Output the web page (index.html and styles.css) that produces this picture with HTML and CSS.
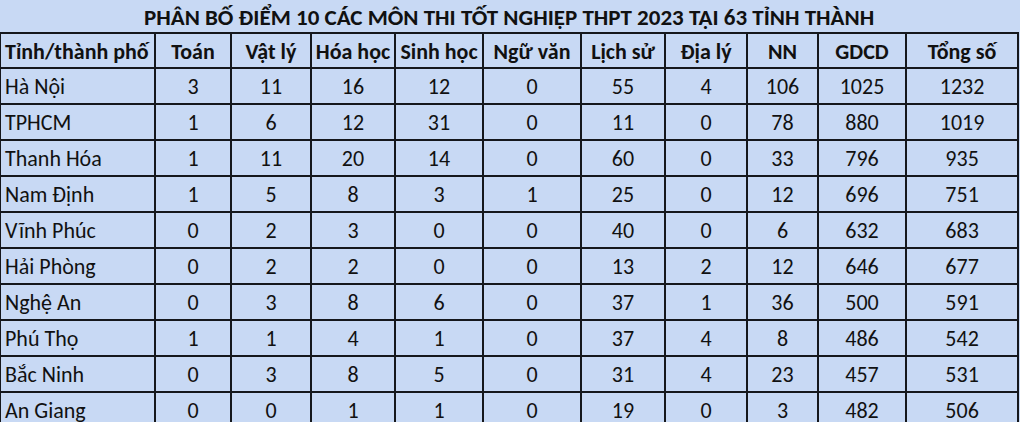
FILE: index.html
```html
<!DOCTYPE html>
<html lang="vi">
<head>
<meta charset="utf-8">
<title>Phân bố điểm 10</title>
<link rel="stylesheet" href="styles.css">
</head>
<body>
<table class="scores">
  <colgroup>
    <col class="c-name"><col class="c1"><col class="c2"><col class="c3"><col class="c4"><col class="c5"><col class="c6"><col class="c7"><col class="c8"><col class="c9"><col class="c10">
  </colgroup>
  <thead>
    <tr class="title-row"><th colspan="11" class="title">PHÂN BỐ ĐIỂM 10 CÁC MÔN THI TỐT NGHIỆP THPT 2023 TẠI 63 TỈNH THÀNH</th></tr>
    <tr class="head-row">
      <th class="name">Tỉnh/thành phố</th><th>Toán</th><th>Vật lý</th><th>Hóa học</th><th>Sinh học</th><th>Ngữ văn</th><th>Lịch sử</th><th>Địa lý</th><th>NN</th><th>GDCD</th><th>Tổng số</th>
    </tr>
  </thead>
  <tbody>
    <tr><td class="name">Hà Nội</td><td>3</td><td>11</td><td>16</td><td>12</td><td>0</td><td>55</td><td>4</td><td>106</td><td>1025</td><td>1232</td></tr>
    <tr><td class="name">TPHCM</td><td>1</td><td>6</td><td>12</td><td>31</td><td>0</td><td>11</td><td>0</td><td>78</td><td>880</td><td>1019</td></tr>
    <tr><td class="name">Thanh Hóa</td><td>1</td><td>11</td><td>20</td><td>14</td><td>0</td><td>60</td><td>0</td><td>33</td><td>796</td><td>935</td></tr>
    <tr><td class="name">Nam Định</td><td>1</td><td>5</td><td>8</td><td>3</td><td>1</td><td>25</td><td>0</td><td>12</td><td>696</td><td>751</td></tr>
    <tr><td class="name">Vĩnh Phúc</td><td>0</td><td>2</td><td>3</td><td>0</td><td>0</td><td>40</td><td>0</td><td>6</td><td>632</td><td>683</td></tr>
    <tr><td class="name">Hải Phòng</td><td>0</td><td>2</td><td>2</td><td>0</td><td>0</td><td>13</td><td>2</td><td>12</td><td>646</td><td>677</td></tr>
    <tr><td class="name">Nghệ An</td><td>0</td><td>3</td><td>8</td><td>6</td><td>0</td><td>37</td><td>1</td><td>36</td><td>500</td><td>591</td></tr>
    <tr><td class="name">Phú Thọ</td><td>1</td><td>1</td><td>4</td><td>1</td><td>0</td><td>37</td><td>4</td><td>8</td><td>486</td><td>542</td></tr>
    <tr><td class="name">Bắc Ninh</td><td>0</td><td>3</td><td>8</td><td>5</td><td>0</td><td>31</td><td>4</td><td>23</td><td>457</td><td>531</td></tr>
    <tr><td class="name">An Giang</td><td>0</td><td>0</td><td>1</td><td>1</td><td>0</td><td>19</td><td>0</td><td>3</td><td>482</td><td>506</td></tr>
  </tbody>
</table>
</body>
</html>
```

FILE: styles.css
```css
html, body {
  margin: 0;
  padding: 0;
  background: #c8d9f4;
  overflow: hidden;
}
body {
  font-family: Carlito, Calibri, Lato, "Open Sans", sans-serif;
  color: #111;
  width: 1020px;
  height: 422px;
}
.scores {
  border-collapse: collapse;
  table-layout: fixed;
  width: 1018px;
  margin-left: -1px;
}
.c-name { width: 155px; }
.c1 { width: 76px; }
.c2 { width: 80px; }
.c3 { width: 84px; }
.c4 { width: 88px; }
.c5 { width: 98px; }
.c6 { width: 84px; }
.c7 { width: 82px; }
.c8 { width: 71px; }
.c9 { width: 88px; }
.c10 { width: 112px; }

.scores th, .scores td {
  border: 2px solid #15171c;
  padding: 2px 0 0;
  text-align: center;
  font-size: 22px;
  line-height: 26px;
  white-space: nowrap;
  overflow: hidden;
}
.scores th { font-weight: bold; }
.scores td { height: 32px; }
.head-row th { height: 31px; }
.title-row .title {
  height: 30px;
  border-top: none;
  border-left: none;
  border-right: none;
  font-size: 23px;
}
.scores .name {
  text-align: left;
  padding-left: 4px;
}
```
